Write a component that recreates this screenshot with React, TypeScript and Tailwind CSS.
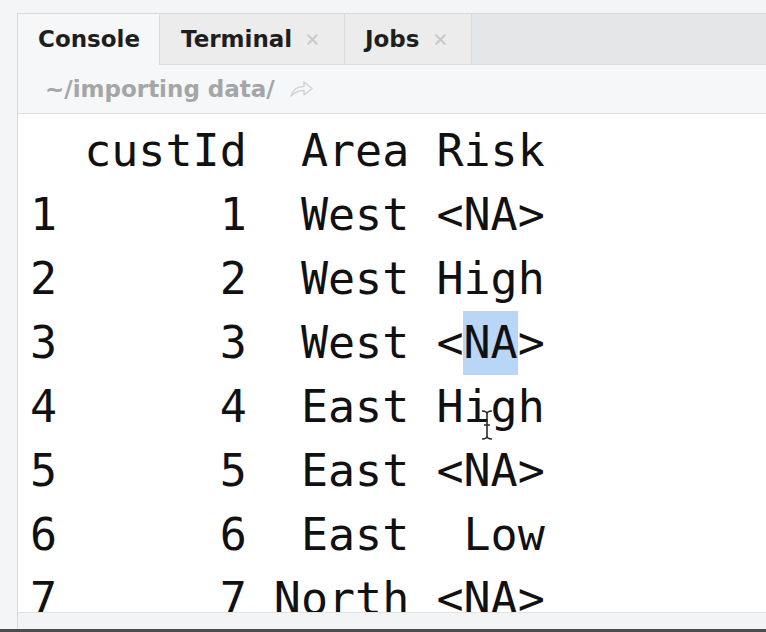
import { X } from 'lucide-react';

const rows: { label: string; id: string; area: string; risk: string }[] = [
  { label: '1', id: '1', area: 'West', risk: '<NA>' },
  { label: '2', id: '2', area: 'West', risk: 'High' },
  { label: '3', id: '3', area: 'West', risk: '<NA>' },
  { label: '4', id: '4', area: 'East', risk: 'High' },
  { label: '5', id: '5', area: 'East', risk: '<NA>' },
  { label: '6', id: '6', area: 'East', risk: 'Low' },
  { label: '7', id: '7', area: 'North', risk: '<NA>' }
];

function pad(s: string, n: number) {
  return s.padStart(n, ' ');
}

function GoToDirIcon() {
  return (
    <svg width="26" height="20" viewBox="0 0 26 20" fill="none">
      <path
        d="M2 17 C4 10 9 7.5 15 7.5 V3 L23 9.5 L15 16 V11.5 C10 11.5 6 13 2 17 Z"
        stroke="#d2d4d6"
        strokeWidth="1.6"
        strokeLinejoin="round"
      />
    </svg>
  );
}

function IBeam() {
  return (
    <svg width="14" height="32" viewBox="0 0 14 32" fill="none">
      <path
        d="M2 2 C5 2 7 3 7 5 V27 C7 29 9 30 12 30 M12 2 C9 2 7 3 7 5 M7 27 C7 29 5 30 2 30 M4 16 H10"
        stroke="#2a2a2a"
        strokeWidth="1.6"
      />
    </svg>
  );
}

export default function App() {
  return (
    <div className="w-[766px] h-[632px] bg-[#f3f5f7] flex flex-col overflow-hidden pt-[13px]">
      <div className="flex-1 min-h-0 ml-[17px] border-l border-t border-[#d6d8db] flex flex-col">
        {/* tab strip */}
        <div className="h-[51px] flex shrink-0 font-['DejaVu_Sans',sans-serif] font-bold text-[23px] text-[#1e1e1e]">
          <div className="w-[141px] bg-[#f5f7f9] flex items-center pl-[20px]">
            Console
          </div>
          <div className="w-[185px] bg-[#ececed] border-l border-b border-[#dadbdd] flex items-center pl-[21px] gap-[12px]">
            Terminal
            <X size={17} strokeWidth={3} className="text-[#c9cacc]" />
          </div>
          <div className="w-[127px] bg-[#ececed] border-l border-b border-[#dadbdd] flex items-center pl-[20px] gap-[12px]">
            Jobs
            <X size={17} strokeWidth={3} className="text-[#c9cacc]" />
          </div>
          <div className="flex-1 bg-[#e5e6e8] border-l border-b border-[#dadbdd]" />
        </div>

        {/* working directory */}
        <div className="h-[49px] shrink-0 bg-[#f5f7f9] border-b border-[#dcdee0] flex items-center pl-[27px] gap-[14px] font-['DejaVu_Sans',sans-serif] font-bold text-[23px] text-[#a4a5a7]">
          <span>~/importing data/</span>
          <GoToDirIcon />
        </div>

        {/* console output */}
        <div className="relative flex-1 min-h-0 bg-white border-b border-[#e0e2e4] overflow-hidden pl-[12px] pt-[5px] font-['DejaVu_Sans_Mono',monospace] text-[45px] leading-[64px] text-[#111] whitespace-pre">
          <div className="h-[64px]">{'  custId  Area Risk'}</div>
          {rows.map((r) => (
            <div key={r.label} className="h-[64px]">
              {r.label + pad(r.id, 7) + ' ' + pad(r.area, 5) + ' '}
              {r.label === '3' ? (
                <>
                  {'<'}
                  <span className="inline-block bg-[#bad6f7]">NA</span>
                  {'>'}
                </>
              ) : (
                pad(r.risk, 4)
              )}
            </div>
          ))}
          <div className="absolute left-[462px] top-[295px]">
            <IBeam />
          </div>
        </div>
        <div className="h-[16px] shrink-0 bg-[#f3f4f6]" />
      </div>
      <div className="h-[3px] shrink-0 bg-[#4b4c4e]" />
    </div>
  );
}
